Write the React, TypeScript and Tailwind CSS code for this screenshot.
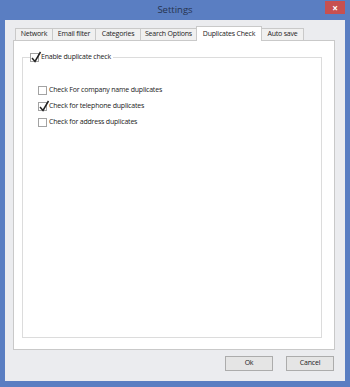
const TABS = [
  { label: 'Network', w: 'w-[38px]' },
  { label: 'Email filter', w: 'w-[44px]' },
  { label: 'Categories', w: 'w-[46px]' },
  { label: 'Search Options', w: 'w-[57px]' },
  { label: 'Duplicates Check', w: 'w-[66px]' },
  { label: 'Auto save', w: 'w-[43px]' },
];
const ACTIVE = 'Duplicates Check';

const Check = ({ checked }: { checked?: boolean }) => (
  <span className="relative inline-block h-[9px] w-[9px] shrink-0 border border-[#a3a3a3] bg-white">
    {checked && (
      <svg viewBox="0 0 12 12" className="absolute -left-[1px] -top-[3px] h-[12px] w-[12px]">
        <path d="M2 7 L5 10.5 L10.5 1" fill="none" stroke="#222" strokeWidth="1.5" />
      </svg>
    )}
  </span>
);

const Option = ({ label, checked }: { label: string; checked?: boolean }) => (
  <div className="flex h-[16px] items-center gap-[2px]">
    <Check checked={checked} />
    <span>{label}</span>
  </div>
);

export default function App() {
  return (
    <div
      className="flex h-[387px] w-[350px] flex-col bg-[#5a7ec2] px-[5px] pb-[6px] text-[7px] tracking-[-0.2px] text-[#222]"
      style={{ fontFamily: '"Open Sans", "Liberation Sans", sans-serif' }}
    >
      <div className="relative flex h-[20px] items-center justify-center text-[9.5px] tracking-normal text-[#263450]">
        Settings
        <div className="absolute right-0 top-[1px] flex h-[13px] w-[20px] items-center justify-center bg-[#c75050] text-[10px] font-bold leading-none text-white">
          ×
        </div>
      </div>

      <div className="flex flex-1 flex-col bg-[#ebecef] pt-[6px]">
        <div className="ml-[10px] flex h-[14px] items-end whitespace-nowrap">
          {TABS.map(({ label, w }) =>
            label === ACTIVE ? (
              <div
                key={label}
                className={`relative z-10 -mb-[1px] -ml-[1px] flex h-[15px] items-center justify-center border border-b-0 border-[#c9c9c9] bg-white ${w}`}
              >
                {label}
              </div>
            ) : (
              <div
                key={label}
                className={`-ml-[1px] flex h-[12px] items-center justify-center border border-b-0 border-[#c9c9c9] bg-[#f0f0f0] first:ml-0 ${w}`}
              >
                {label}
              </div>
            )
          )}
        </div>

        <div className="ml-[8px] mr-[10px] h-[310px] border border-[#c9c9c9] bg-white pl-[8px] pr-[12px] pt-[16px] pb-[11px]">
          <div className="relative h-full border border-[#dcdcdc]">
            <div className="absolute -top-[6px] left-[7px] flex items-center gap-[2px] bg-white pr-[2px]">
              <Check checked />
              <span>Enable duplicate check</span>
            </div>
            <div className="pl-[15px] pt-[24px]">
              <Option label="Check For company name duplicates" />
              <Option label="Check for telephone duplicates" checked />
              <Option label="Check for address duplicates" />
            </div>
          </div>
        </div>

        <div className="mr-[11px] mt-[6px] flex justify-end gap-[13px]">
          <button className="flex h-[15px] w-[48px] items-center justify-center border border-[#acacac] bg-[#e5e5e5]">
            Ok
          </button>
          <button className="flex h-[15px] w-[48px] items-center justify-center border border-[#acacac] bg-[#e5e5e5]">
            Cancel
          </button>
        </div>
      </div>
    </div>
  );
}
